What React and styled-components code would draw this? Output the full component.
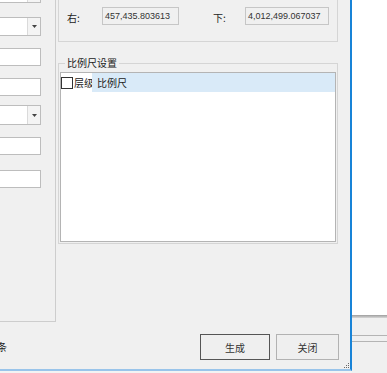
import React from "react";
import styled, { createGlobalStyle } from "styled-components";

const GlobalStyle = createGlobalStyle`
  * { box-sizing: border-box; }
  html, body { margin: 0; padding: 0; }
  body {
    background: #f0f0f0;
    font-family: "Noto Sans CJK SC", "Microsoft YaHei", sans-serif;
    font-size: 10px;
    color: #222;
  }
`;

const fields = [
  { combo: true, mt: -16, h: 19 },
  { combo: true, mt: 14, h: 19 },
  { combo: false, mt: 12, h: 18 },
  { combo: false, mt: 12, h: 18 },
  { combo: true, mt: 9, h: 20 },
  { combo: false, mt: 12, h: 18 },
  { combo: false, mt: 15, h: 18 },
];

const App = () => {
  return (
    <>
      <GlobalStyle />
      <Screen>
        <Dialog>
          <Body>
            <LeftPanel>
              {fields.map((f, i) => (
                <Field key={i} $mt={f.mt} $h={f.h}>
                  <FieldText />
                  {f.combo && (
                    <DropButton>
                      <svg width="5" height="3" viewBox="0 0 5 3">
                        <path d="M0 0h5L2.5 3z" fill="#444" />
                      </svg>
                    </DropButton>
                  )}
                </Field>
              ))}
            </LeftPanel>
            <RightColumn>
              <ExtentGroup>
                <ExtentRow>
                  <Label>右:</Label>
                  <ReadOnlyBox $w={77}>457,435.803613</ReadOnlyBox>
                  <Label $ml={34} $w={32}>下:</Label>
                  <ReadOnlyBox $w={84}>4,012,499.067037</ReadOnlyBox>
                </ExtentRow>
              </ExtentGroup>
              <ScaleGroup>
                <Legend>比例尺设置</Legend>
                <ListBox>
                  <HeaderRow>
                    <LevelCell>
                      <CheckBox />
                      <span>层级</span>
                    </LevelCell>
                    <ScaleCell>比例尺</ScaleCell>
                  </HeaderRow>
                </ListBox>
              </ScaleGroup>
            </RightColumn>
          </Body>
          <Footer>
            <CutLabel>
              <span>显示比例条</span>
            </CutLabel>
            <Buttons>
              <Button $w={70} $default>生成</Button>
              <Button $w={63}>关闭</Button>
            </Buttons>
          </Footer>
          <Grip width="6" height="6" viewBox="0 0 6 6">
            <rect x="4" y="0" width="1" height="1" fill="#6a6a6a" />
            <rect x="2" y="2" width="1" height="1" fill="#6a6a6a" />
            <rect x="4" y="2" width="1" height="1" fill="#6a6a6a" />
            <rect x="0" y="4" width="1" height="1" fill="#6a6a6a" />
            <rect x="2" y="4" width="1" height="1" fill="#6a6a6a" />
            <rect x="4" y="4" width="1" height="1" fill="#6a6a6a" />
          </Grip>
        </Dialog>
        <BackWindow>
          <BackCanvas />
          <BackShadow />
          <BackRule $mt={17} />
          <BackRule $mt={5} />
        </BackWindow>
      </Screen>
    </>
  );
};

const Screen = styled.div`
  display: flex;
  width: 387px;
  height: 373px;
  overflow: hidden;
  background: #f3f3f3;
`;
const Dialog = styled.div`
  position: relative;
  flex: none;
  width: 352px;
  height: 371px;
  display: flex;
  flex-direction: column;
  overflow: hidden;
  background: #f0f0f0;
  border-right: 2px solid #1883d7;
  border-bottom: 2px solid #99c4ea;
`;
const Body = styled.div`
  display: flex;
  flex: none;
  height: 322px;
`;
const LeftPanel = styled.div`
  width: 56px;
  display: flex;
  flex-direction: column;
  border-right: 1px solid #cdcdcd;
  border-bottom: 1px solid #cdcdcd;
`;
const Field = styled.div`
  display: flex;
  flex: none;
  width: 61px;
  height: ${(p) => p.$h}px;
  margin: ${(p) => p.$mt}px 0 0 -20px;
  background: #fff;
  border: 1px solid #bdbdbd;
`;
const FieldText = styled.div`
  flex: 1;
`;
const DropButton = styled.div`
  width: 13px;
  display: flex;
  align-items: center;
  justify-content: center;
  background: #f4f4f4;
  border-left: 1px solid #dadada;
`;
const RightColumn = styled.div`
  display: flex;
  flex-direction: column;
  width: 280px;
  margin-left: 2px;
`;
const ExtentGroup = styled.div`
  margin-top: -20px;
  padding: 26px 0 16px 8px;
  border: 1px solid #d5d5d5;
`;
const ExtentRow = styled.div`
  display: flex;
  align-items: center;
  height: 18px;
`;
const Label = styled.div`
  width: ${(p) => p.$w || 35}px;
  margin-left: ${(p) => p.$ml || 0}px;
  padding-top: 3px;
  line-height: 14px;
  color: #222;
`;
const ReadOnlyBox = styled.div`
  width: ${(p) => p.$w}px;
  height: 18px;
  padding-left: 2px;
  border: 1px solid #c6c6c6;
  background: #f0f0f0;
  font-family: "Liberation Sans", Arial, sans-serif;
  font-size: 9px;
  line-height: 16px;
  color: #333;
  white-space: nowrap;
`;
const ScaleGroup = styled.fieldset`
  margin: 14px 0 0 0;
  padding: 2px 1px 1px 1px;
  border: 1px solid #d5d5d5;
  min-width: 0;
`;
const Legend = styled.legend`
  margin-left: 5px;
  padding: 0 2px;
  line-height: 14px;
  color: #222;
`;
const ListBox = styled.div`
  height: 170px;
  background: #fff;
  border: 1px solid #b4b4b4;
`;
const HeaderRow = styled.div`
  display: flex;
  height: 19px;
  line-height: 19px;
`;
const LevelCell = styled.div`
  display: flex;
  align-items: center;
  gap: 1px;
  width: 31px;
  overflow: hidden;
  background: #fff;
  white-space: nowrap;
`;
const CheckBox = styled.div`
  flex: none;
  width: 12px;
  height: 12px;
  border: 1px solid #333;
  background: #fff;
`;
const ScaleCell = styled.div`
  flex: 1;
  padding-left: 5px;
  background: #d9eaf8;
`;
const Footer = styled.div`
  display: flex;
  align-items: flex-start;
  flex: 1;
  padding: 12px 11px 0 0;
`;
const CutLabel = styled.div`
  display: flex;
  justify-content: flex-end;
  width: 7px;
  margin-top: 6px;
  overflow: hidden;
  line-height: 14px;
  white-space: nowrap;
  color: #222;
`;
const Buttons = styled.div`
  display: flex;
  gap: 6px;
  margin-left: auto;
`;
const Button = styled.div`
  width: ${(p) => p.$w}px;
  height: 26px;
  display: flex;
  align-items: center;
  justify-content: center;
  background: #efefef;
  border: 1px solid ${(p) => (p.$default ? "#555" : "#b2b2b2")};
  color: #333;
`;
const Grip = styled.svg`
  position: absolute;
  right: 0;
  bottom: 0;
`;
const BackWindow = styled.div`
  flex: 1;
  display: flex;
  flex-direction: column;
  background: #f0f0f0;
`;
const BackCanvas = styled.div`
  height: 315px;
  background: #fff;
`;
const BackShadow = styled.div`
  height: 3px;
  background: linear-gradient(#9d9d9d, #d8d8d8);
`;
const BackRule = styled.div`
  height: 1px;
  margin-top: ${(p) => p.$mt}px;
  background: #b4b4b4;
`;

export default App;
